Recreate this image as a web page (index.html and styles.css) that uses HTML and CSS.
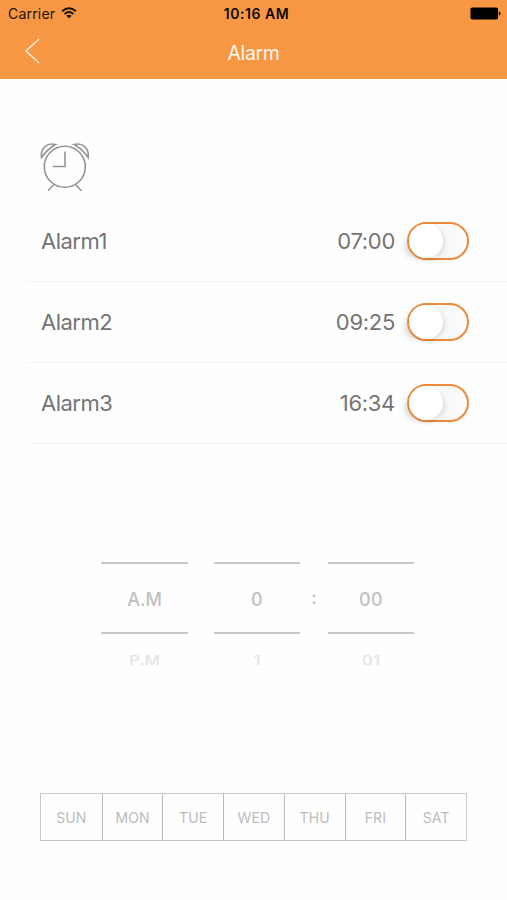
FILE: index.html
```html
<!DOCTYPE html>
<html lang="en">
<head>
<meta charset="utf-8">
<title>Alarm</title>
<link rel="stylesheet" href="styles.css">
</head>
<body>
<header class="header">
  <div class="status">
    <div class="carrier"><span>Carrier</span>
      <svg class="wifi" width="16" height="12" viewBox="0 0 16 12"><g fill="none" stroke="#1d1208" stroke-width="1.8"><path d="M1 4.3Q8-1.7 15 4.3"/><path d="M3.5 7Q8 3 12.5 7"/></g><path d="M5.4 8.7Q8 6.6 10.6 8.7L8 11.4Z" fill="#1d1208"/></svg>
    </div>
    <div class="clock">10:16 AM</div>
    <svg class="battery" width="31" height="13" viewBox="0 0 31 13"><rect x=".5" y=".5" width="27.5" height="12" rx="1.8"/><path d="M28.8 4.3Q30.6 5 30.6 6.5T28.8 8.7Z"/></svg>
  </div>
  <nav class="nav">
    <svg class="back" width="16" height="28" viewBox="0 0 16 28"><path d="M15 2L2 14L15 26" fill="none" stroke="#ffe9d5" stroke-width="1.6"/></svg>
    <h1>Alarm</h1>
  </nav>
</header>
<main>
  <svg class="alarm-icon" width="50" height="52" viewBox="0 0 50 52"><g fill="none" stroke="#949494" stroke-width="1.6"><circle cx="24.8" cy="26.8" r="20.5"/><path d="M25 11.5V26.5H13M14 44.5L8 50.7M35.5 44.5L41.5 50.7"/><path d="M1.500 17.500C.5 8 7 2.500 15.500 4.500C10 7.500 5.500 12 1.500 17.500ZM48.200 17.500C49.200 8 42.700 2.500 34.200 4.500C39.700 7.500 44.200 12 48.200 17.500Z"/></g></svg>
  <section class="alarms">
    <div class="alarm"><span>Alarm1</span><time>07:00</time><i class="switch"></i></div>
    <div class="alarm"><span>Alarm2</span><time>09:25</time><i class="switch"></i></div>
    <div class="alarm"><span>Alarm3</span><time>16:34</time><i class="switch"></i></div>
  </section>
  <section class="picker">
    <div class="wheel"><div class="current">A.M</div><div class="next">P.M</div></div>
    <div class="wheel"><div class="current">0</div><div class="next">1</div></div>
    <div class="colon">:</div>
    <div class="wheel"><div class="current">00</div><div class="next">01</div></div>
  </section>
  <section class="days">
    <div>SUN</div><div>MON</div><div>TUE</div><div>WED</div><div>THU</div><div>FRI</div><div>SAT</div>
  </section>
</main>
</body>
</html>
```

FILE: styles.css
```css
* { box-sizing: border-box; }
body {
  margin: 0;
  height: 900px;
  overflow: hidden;
  background: #fefefe;
  font-family: Inter, "Liberation Sans", sans-serif;
}
svg { display: block; }
.header { height: 79px; background: #f89743; }
.status {
  display: grid;
  grid-template-columns: 1fr auto 1fr;
  align-items: center;
  height: 27px;
  padding: 0 6px 0 8px;
  font-size: 14px;
  color: #1d1208;
}
.carrier { display: flex; align-items: center; gap: 6px; letter-spacing: .2px; }
.wifi { margin-top: -2px; }
.clock {
  font-weight: 600;
  color: #0d0803;
  letter-spacing: .55px;
  transform: translateX(2px);
}
.battery { justify-self: end; }
.nav {
  display: grid;
  grid-template-columns: 24px 1fr 24px;
  align-items: center;
  height: 52px;
  padding: 0 24px 4px 24px;
}
.nav h1 {
  margin: 4px 0 0;
  font-size: 19.5px;
  font-weight: 400;
  letter-spacing: -.4px;
  text-align: center;
  color: #fff8f0;
}
.alarm-icon { margin: 61px 0 0 40px; }
.alarms { margin: 9px 0 0 28px; }
.alarm {
  display: flex;
  align-items: center;
  height: 81px;
  padding: 0 38px 1px 13px;
  border-bottom: 1px solid #f3f3f3;
  font-size: 22px;
  letter-spacing: -.5px;
  color: #747474;
}
.alarm time { margin-left: auto; margin-right: 12px; letter-spacing: -.3px; }
.switch {
  width: 62px;
  height: 38px;
  border: 2px solid #ec8a38;
  border-radius: 19px;
  background: linear-gradient(90deg, #fff 40%, #f7f7f7 60%, #fdfdfd);
  box-shadow: -9px 5px 7px -8px #c8c8c8;
}
.switch::before {
  content: "";
  display: block;
  width: 34px;
  height: 34px;
  border-radius: 50%;
  background: #fff;
  box-shadow: 2px 2px 4px rgba(0, 0, 0, .11);
}
.picker {
  display: flex;
  margin: 118px 0 0 101px;
  height: 104px;
  font-size: 18px;
  font-weight: 500;
  color: #c0c0c0;
}
.wheel { width: 87px; margin-right: 26px; text-align: center; }
.wheel:nth-child(2) { width: 86px; margin-right: 0; }
.wheel:last-child { width: 86px; margin-right: 0; }
.current {
  height: 72px;
  line-height: 71px;
  border: solid #c8c8c8;
  border-width: 2px 0;
  letter-spacing: .4px;
}
.wheel:first-child .current { letter-spacing: 0; }
.colon { width: 28px; line-height: 72px; text-align: center; }
.next {
  height: 22px;
  margin-top: 15px;
  line-height: 22px;
  font-size: 17px;
  color: #e4e4e4;
  transform: scaleY(.75);
}
.days {
  display: grid;
  grid-template-columns: repeat(7, 1fr);
  width: 427px;
  height: 48px;
  margin: 127px 0 0 40px;
  border: 1px solid #cacaca;
  font-size: 14px;
  letter-spacing: .15px;
  color: #bcbcbc;
}
.days div { display: grid; place-items: center; }
.days div + div { border-left: 1px solid #b8b8b8; }
```
